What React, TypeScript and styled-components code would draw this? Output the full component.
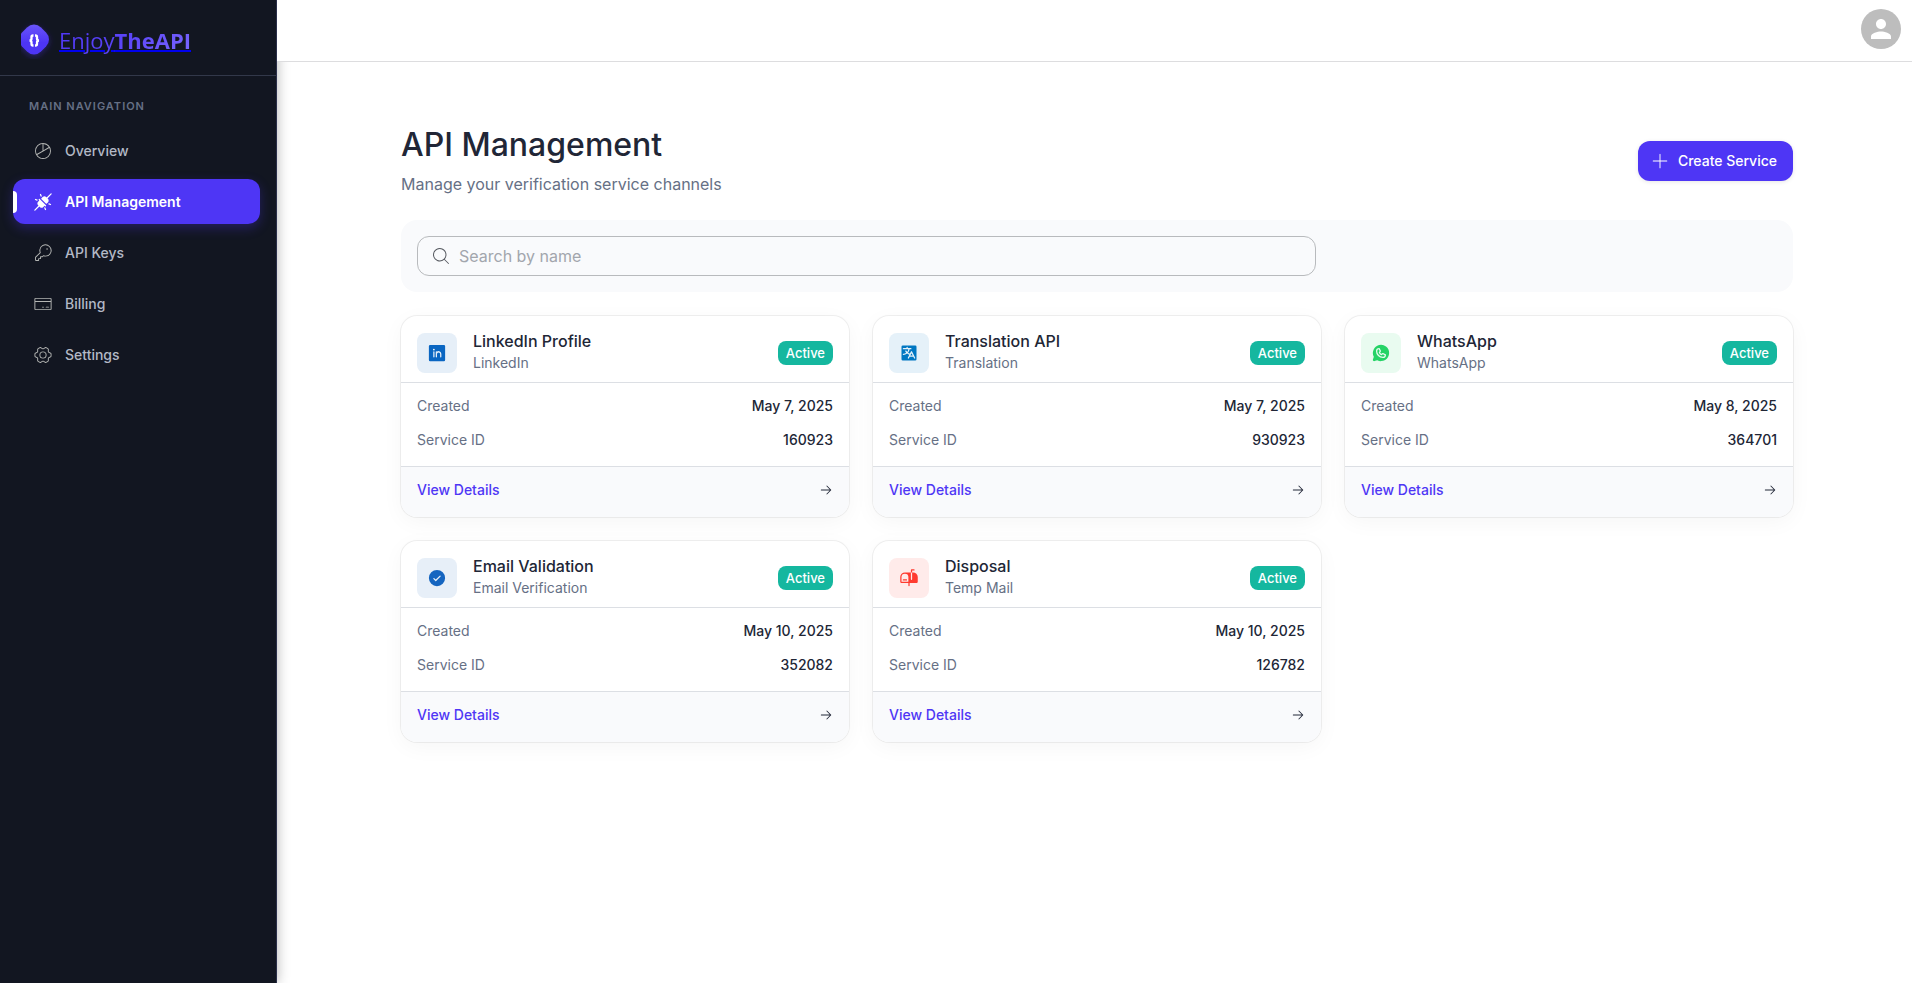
import React from "react";
import styled, { createGlobalStyle } from "styled-components";
import type { IconType } from "react-icons";
import {
  PiArrowRight,
  PiChartPieLight,
  PiCheckCircleFill,
  PiCreditCardLight,
  PiGearSixLight,
  PiKeyLight,
  PiLinkedinLogoFill,
  PiMagnifyingGlassLight,
  PiMailboxFill,
  PiPlugsConnectedFill,
  PiPlusLight,
  PiTranslateFill,
  PiWhatsappLogoFill,
} from "react-icons/pi";
import { MdPerson } from "react-icons/md";

const GlobalStyle = createGlobalStyle`
  * { box-sizing: border-box; }
  body {
    margin: 0;
    background: #ffffff;
    color: #212636;
    font-family: Inter, "Liberation Sans", sans-serif;
    font-size: 14px;
    line-height: 22px;
  }
  h1, h2, p, dl, dd, ul { margin: 0; padding: 0; }
`;

const Shell = styled.div`
  display: flex;
  min-height: 100vh;
`;

const Sidebar = styled.aside`
  flex: 0 0 277px;
  background: #121621;
  border-right: 1px solid #2a2f4a;
  box-shadow: 0 0 12px rgba(0, 0, 0, 0.3);
`;

const Brand = styled.div`
  display: flex;
  align-items: center;
  height: 76px;
  padding: 5px 21px 0;
  border-bottom: 1px solid #32384a;
`;

const BrandLink = styled.a`
  display: flex;
  align-items: center;
  gap: 3px;
  color: #0000ee;
  text-decoration: none;
`;

const BrandName = styled.span`
  font-family: "Open Sans", "Noto Sans", sans-serif;
  font-size: 22px;
  line-height: 32px;
  background: linear-gradient(135deg, #4e36f5 0%, #5b45f8 50%, #7b68ff 100%);
  background-clip: text;
  -webkit-background-clip: text;
  -webkit-text-fill-color: transparent;
  text-decoration: underline 2px #0000ee;

  strong { font-weight: 700; }
`;

const NavHeading = styled.p`
  padding: 20px 29px 11px;
  color: #667085;
  font-size: 11px;
  line-height: 21px;
  font-weight: 600;
  letter-spacing: 1px;
  text-transform: uppercase;
`;

const NavList = styled.ul`
  display: flex;
  flex-direction: column;
  gap: 6px;
  padding: 0 16px 0 13px;
  list-style: none;
`;

const NavLink = styled.a<{ $active?: boolean }>`
  position: relative;
  display: flex;
  align-items: center;
  gap: 12px;
  height: 45px;
  padding: 0 20px;
  border-radius: 12px;
  background: ${(p) => (p.$active ? "#4e36f5" : "transparent")};
  box-shadow: ${(p) => (p.$active ? "0 4px 12px rgba(78, 54, 245, 0.3)" : "none")};
  color: ${(p) => (p.$active ? "#ffffff" : "#b3b9c6")};
  font-weight: ${(p) => (p.$active ? 600 : 500)};
  text-decoration: none;

  svg { color: ${(p) => (p.$active ? "#ffffff" : "#b4b6b4")}; }
`;

const ActiveMark = styled.span`
  position: absolute;
  left: 0;
  top: 12px;
  bottom: 11px;
  width: 4px;
  border-radius: 0 4px 4px 0;
  background: #ffffff;
`;

const Main = styled.div`
  position: relative;
  flex: 1;
  min-width: 0;
`;

const TopBar = styled.header`
  display: flex;
  align-items: center;
  justify-content: flex-end;
  height: 62px;
  padding: 0 11px 3px;
  background: #ffffff;
  border-bottom: 1px solid #dddddf;
`;

const Avatar = styled.button`
  display: grid;
  place-items: center;
  width: 40px;
  height: 40px;
  padding: 0;
  border: 0;
  border-radius: 50%;
  background: #bdbdbd;
  color: #ffffff;
`;

const Content = styled.main`
  display: flex;
  flex-direction: column;
  gap: 24px;
  max-width: 1445px;
  margin: 0 auto;
  padding: 64px 24px 64px 29px;
`;

const PageHead = styled.div`
  display: flex;
  align-items: center;
  justify-content: space-between;
`;

const Title = styled.h1`
  font-size: 32px;
  line-height: 38px;
  font-weight: 500;
`;

const Subtitle = styled.p`
  padding-top: 8px;
  color: #667085;
  font-size: 16px;
  line-height: 24px;
`;

const CreateButton = styled.button`
  display: flex;
  align-items: center;
  gap: 8px;
  height: 40px;
  padding: 0 16px 0 12px;
  border: 0;
  border-radius: 12px;
  background: #4e36f5;
  box-shadow: 0 1px 4px rgba(0, 0, 0, 0.1);
  color: #ffffff;
  font: 500 14px/24px Inter, sans-serif;
`;

const Filters = styled.form`
  display: grid;
  grid-template-columns: 2fr 1fr;
  gap: 12px;
  padding: 16px;
  border-radius: 16px;
  background: #f9fafc;
`;

const SearchBox = styled.label`
  display: flex;
  align-items: center;
  gap: 8px;
  height: 40px;
  padding: 0 13px;
  border: 1px solid #b8babd;
  border-radius: 12px;
  color: #55585f;
`;

const SearchInput = styled.input`
  flex: 1;
  min-width: 0;
  padding: 0;
  border: 0;
  outline: 0;
  background: transparent;
  color: #212636;
  font: 400 16px/24px Inter, sans-serif;

  &::placeholder { color: #a2a6ad; opacity: 1; }
`;

const CardGrid = styled.section`
  display: grid;
  grid-template-columns: repeat(3, 1fr);
  gap: 24px;
`;

const Card = styled.article`
  overflow: hidden;
  border-radius: 16px;
  background: #ffffff;
  box-shadow: 0 5px 22px rgba(0, 0, 0, 0.04), 0 0 0 1px rgba(0, 0, 0, 0.06);
`;

const CardHead = styled.div`
  display: flex;
  align-items: center;
  gap: 16px;
  height: 67px;
  padding: 16px 16px 8px;
  border-bottom: 1px solid #dcdfe4;
`;

const ServiceIcon = styled.span<{ $color: string; $tint: string }>`
  display: grid;
  place-items: center;
  width: 40px;
  height: 40px;
  border-radius: 8px;
  background: ${(p) => p.$tint};
  color: ${(p) => p.$color};
`;

const CardTitles = styled.div`
  flex: 1;
  min-width: 0;
`;

const CardTitle = styled.h2`
  font-size: 16px;
  line-height: 20px;
  font-weight: 500;
`;

const CardType = styled.p`
  color: #667085;
  line-height: 24px;
`;

const Badge = styled.span`
  padding: 0 8px;
  border-radius: 8px;
  background: #15b79f;
  color: #ffffff;
  font-size: 13px;
  line-height: 24px;
  font-weight: 500;
`;

const Details = styled.dl`
  display: flex;
  flex-direction: column;
  gap: 12px;
  padding: 12px 16px 15px;
`;

const Detail = styled.div`
  display: flex;
  justify-content: space-between;

  dt { color: #667085; }
  dd { font-weight: 500; }
`;

const CardLink = styled.a`
  display: flex;
  align-items: center;
  justify-content: space-between;
  padding: 12px 16px 16px;
  border-top: 1px solid #dcdfe4;
  background: #f9fafc;
  color: #4e36f5;
  font-weight: 500;
  text-decoration: none;

  svg { color: #212636; }
`;

const navItems: { label: string; icon: IconType; active?: boolean }[] = [
  { label: "Overview", icon: PiChartPieLight },
  { label: "API Management", icon: PiPlugsConnectedFill, active: true },
  { label: "API Keys", icon: PiKeyLight },
  { label: "Billing", icon: PiCreditCardLight },
  { label: "Settings", icon: PiGearSixLight },
];

const services: {
  name: string;
  type: string;
  created: string;
  id: string;
  icon: IconType;
  color: string;
  tint: string;
}[] = [
  { name: "LinkedIn Profile", type: "LinkedIn", created: "May 7, 2025", id: "160923", icon: PiLinkedinLogoFill, color: "#0a66c2", tint: "#e6eff8" },
  { name: "Translation API", type: "Translation", created: "May 7, 2025", id: "930923", icon: PiTranslateFill, color: "#0077c2", tint: "#e5f1f9" },
  { name: "WhatsApp", type: "WhatsApp", created: "May 8, 2025", id: "364701", icon: PiWhatsappLogoFill, color: "#25d366", tint: "#e9fbf0" },
  { name: "Email Validation", type: "Email Verification", created: "May 10, 2025", id: "352082", icon: PiCheckCircleFill, color: "#1565c0", tint: "#e7eff8" },
  { name: "Disposal", type: "Temp Mail", created: "May 10, 2025", id: "126782", icon: PiMailboxFill, color: "#ff3b30", tint: "#ffebea" },
];

function Logo() {
  return (
    <svg width="35" height="38" viewBox="0 0 35 38" aria-hidden="true">
      <defs>
        <linearGradient id="logoFill" x1="0" y1="0" x2="0" y2="1">
          <stop offset="0" stopColor="#6a55fa" />
          <stop offset="0.6" stopColor="#4e36f5" />
        </linearGradient>
        <filter id="logoGlow" x="-50%" y="-50%" width="200%" height="200%">
          <feDropShadow dx="0" dy="2" stdDeviation="3" floodColor="#4e36f5" floodOpacity="0.35" />
        </filter>
      </defs>
      <path
        d="M13 3.5 Q17 3.5 20 6.5 L25 11.5 Q28 14.5 28 18.5 Q28 22.5 25 25.5 L20 30.5 Q17 33.5 13 33.5 Q9 33.5 6 30.5 L1 25.5 Q-2 22.5 -2 18.5 Q-2 14.5 1 11.5 L6 6.5 Q9 3.5 13 3.5Z"
        fill="url(#logoFill)"
        filter="url(#logoGlow)"
      />
      <path
        d="M12.5 14.5 H12 Q10.5 14.5 10.5 16 V17.5 Q10.5 19.5 8.5 19.5 Q10.5 19.5 10.5 21.5 V23 Q10.5 24.5 12 24.5 H12.5 M14 14.5 H14.5 Q16 14.5 16 16 V17.5 Q16 19.5 18 19.5 Q16 19.5 16 21.5 V23 Q16 24.5 14.5 24.5 H14"
        fill="none"
        stroke="#ffffff"
        strokeWidth="2.3"
      />
    </svg>
  );
}

export default function App() {
  return (
    <>
      <GlobalStyle />
      <Shell>
        <Sidebar>
          <Brand>
            <BrandLink href="#">
              <Logo />
              <BrandName>
                Enjoy<strong>TheAPI</strong>
              </BrandName>
            </BrandLink>
          </Brand>
          <nav aria-label="Main navigation">
            <NavHeading>Main Navigation</NavHeading>
            <NavList>
              {navItems.map(({ label, icon: Icon, active }) => (
                <li key={label}>
                  <NavLink href="#" $active={active} aria-current={active ? "page" : undefined}>
                    {active && <ActiveMark />}
                    <Icon size={20} />
                    {label}
                  </NavLink>
                </li>
              ))}
            </NavList>
          </nav>
        </Sidebar>
        <Main>
          <TopBar>
            <Avatar type="button" aria-label="Account">
              <MdPerson size={30} />
            </Avatar>
          </TopBar>
          <Content>
            <PageHead>
              <div>
                <Title>API Management</Title>
                <Subtitle>Manage your verification service channels</Subtitle>
              </div>
              <CreateButton type="button">
                <PiPlusLight size={20} />
                Create Service
              </CreateButton>
            </PageHead>
            <Filters role="search">
              <SearchBox>
                <PiMagnifyingGlassLight size={20} />
                <SearchInput type="search" placeholder="Search by name" aria-label="Search by name" />
              </SearchBox>
            </Filters>
            <CardGrid>
              {services.map(({ name, type, created, id, icon: Icon, color, tint }) => (
                <Card key={id}>
                  <CardHead>
                    <ServiceIcon $color={color} $tint={tint}>
                      <Icon size={20} />
                    </ServiceIcon>
                    <CardTitles>
                      <CardTitle>{name}</CardTitle>
                      <CardType>{type}</CardType>
                    </CardTitles>
                    <Badge>Active</Badge>
                  </CardHead>
                  <Details>
                    <Detail>
                      <dt>Created</dt>
                      <dd>{created}</dd>
                    </Detail>
                    <Detail>
                      <dt>Service ID</dt>
                      <dd>{id}</dd>
                    </Detail>
                  </Details>
                  <CardLink href="#">
                    View Details
                    <PiArrowRight size={14} />
                  </CardLink>
                </Card>
              ))}
            </CardGrid>
          </Content>
        </Main>
      </Shell>
    </>
  );
}
